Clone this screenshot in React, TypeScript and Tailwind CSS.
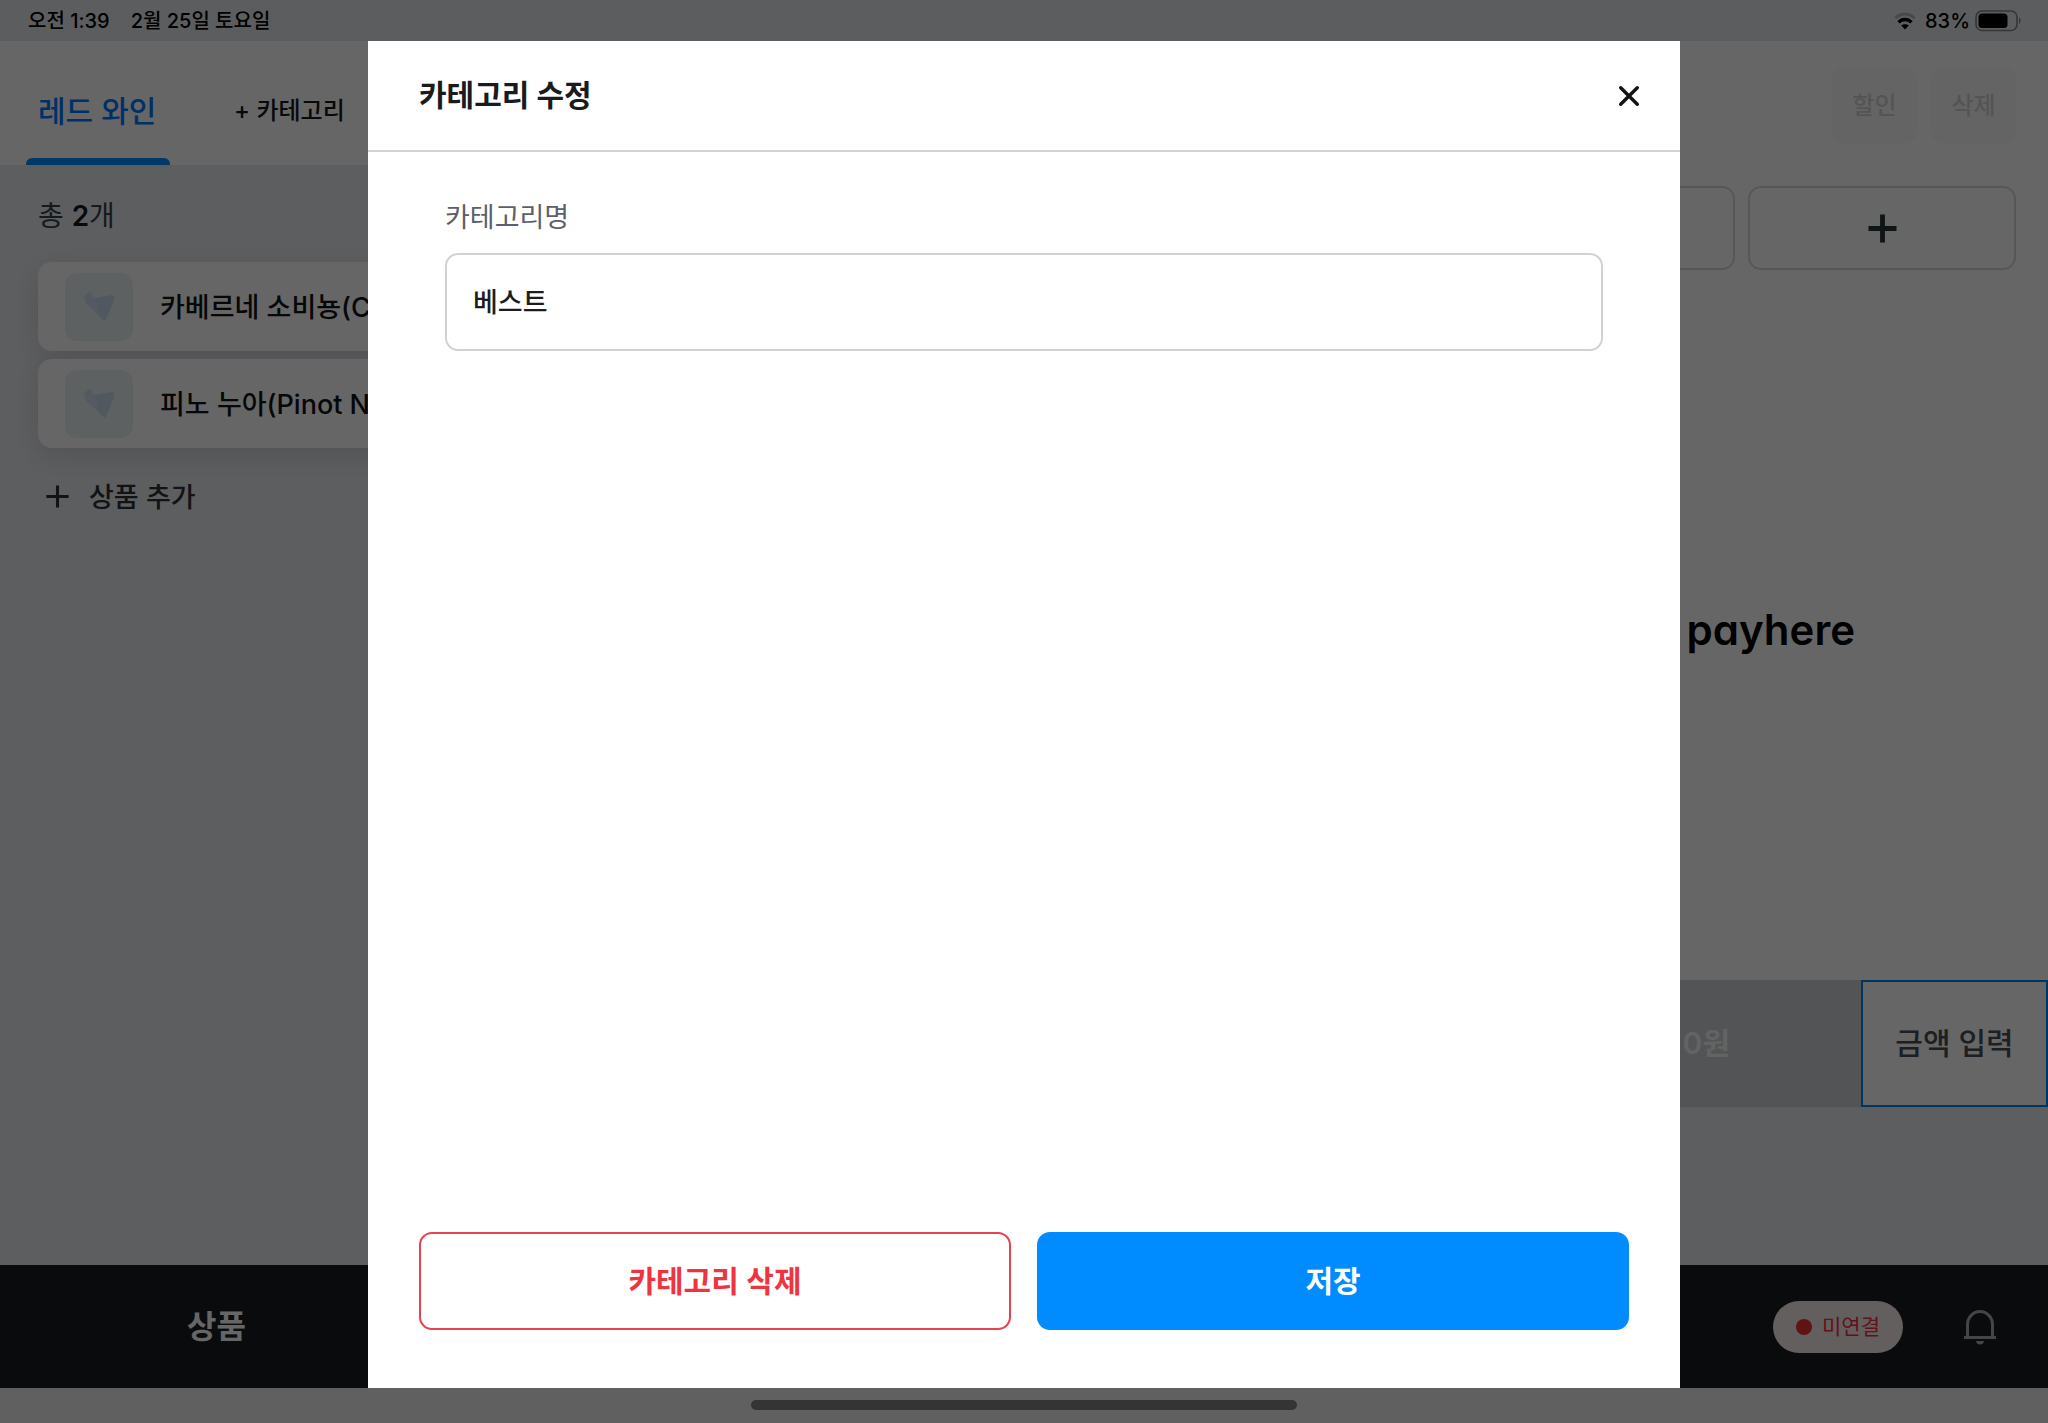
import { useState } from 'react';

const products = [
  { id: 1, name: '카베르네 소비뇽(Cabernet Sauvignon)' },
  { id: 2, name: '피노 누아(Pinot Noir)' },
];

function PlusIcon({ size, stroke }: { size: number; stroke: number }) {
  return (
    <svg width={size} height={size} viewBox="0 0 30 30" fill="none" stroke="currentColor" strokeWidth={stroke}>
      <path d="M15 0.5V29.5M0.5 15H29.5" />
    </svg>
  );
}

function HeartThumb() {
  return (
    <div className="flex h-[68px] w-[68px] shrink-0 items-center justify-center rounded-xl bg-[#ecf3f5]">
      <svg width="32" height="30" viewBox="0 0 32 30">
        <path d="M1 4L3 2L6 0L9 1L10 5L13 6L30 3L31 5L30 11L22 29L17 25L10 18L3 12Z" fill="#d3e2f2" />
        <path d="M12 6L30 3L31 5L30 11L22 29L17 25L15 16Z" fill="#cadbee" />
      </svg>
    </div>
  );
}

function StatusBar() {
  return (
    <header className="flex h-[41px] shrink-0 items-center justify-between bg-[#e7e8ec] pr-[26px] pl-7 text-[20px] font-medium text-black">
      <div className="flex gap-[21px]">
        <span>오전 1:39</span>
        <span>2월 25일 토요일</span>
      </div>
      <div className="flex items-center">
        <svg className="mr-[9px]" width="22" height="18" viewBox="0 0 22 18" fill="none">
          <path d="M1.500 6.200C7 0.600 15 0.600 20.500 6.200" stroke="#b4b5b8" strokeWidth="3" />
          <path d="M4.500 10.300C8.300 6.500 13.700 6.500 17.500 10.300" stroke="#000" strokeWidth="3.400" />
          <path d="M11 17.500L7.200 13.600C9.400 11.700 12.600 11.700 14.800 13.600Z" fill="#000" />
        </svg>
        <span className="mr-[5px]">83%</span>
        <svg width="47" height="22" viewBox="0 0 47 22" fill="none">
          <rect x="1" y="1" width="41" height="19.5" rx="6" stroke="#85868a" strokeWidth="1.6" />
          <rect x="3.5" y="3.5" width="29" height="14.5" rx="3.5" fill="#000" />
          <path d="M44 7.5C46 8.5 46 13 44 14Z" fill="#85868a" />
        </svg>
      </div>
    </header>
  );
}

function ProductPanel() {
  return (
    <section className="flex min-w-0 flex-1 flex-col bg-[#e9ebef]">
      <nav className="flex h-[124px] shrink-0 bg-white pl-[26px]">
        <button className="flex w-36 flex-col text-[30px] font-medium text-[#0078ff]">
          <span className="flex flex-1 items-center pt-6 pl-3">레드 와인</span>
          <span className="h-[7px] w-full rounded-t-md bg-[#008cff]" />
        </button>
        <button className="ml-16 pt-6 pb-2 text-[24px] font-medium text-[#15181c]">+ 카테고리</button>
      </nav>
      <div className="flex flex-col pr-8 pl-[38px]">
        <p className="mt-[33px] text-[28px] leading-9 text-[#3b4046]">
          총 <b className="font-semibold text-[#15181c]">2</b>개
        </p>
        <ul className="mt-7 flex flex-col gap-2">
          {products.map((product) => (
            <li
              key={product.id}
              className="flex h-[89px] items-center rounded-[14px] bg-white px-[27px] shadow-[0_8px_28px_rgba(0,0,0,0.12)]"
            >
              <HeartThumb />
              <span className="ml-[27px] truncate pt-1 text-[27px] font-medium text-[#101214]">{product.name}</span>
            </li>
          ))}
        </ul>
        <button className="mt-[26px] flex items-center gap-5 self-start pl-2 text-[27px] font-medium text-[#2b3036]">
          <PlusIcon size={23} stroke={4} />
          <span className="pt-1">상품 추가</span>
        </button>
      </div>
    </section>
  );
}

function OrderPanel() {
  return (
    <section className="flex w-[894px] shrink-0 flex-col bg-[#e9ebef]">
      <div className="flex flex-1 flex-col bg-white px-8 pt-[27px]">
        <div className="flex justify-end gap-[14px] text-[24px] font-medium text-[#d3d3d5]">
          <button disabled className="h-[75px] w-[85px] rounded-[10px] bg-[#fafafa]">할인</button>
          <button disabled className="h-[75px] w-[85px] rounded-[10px] bg-[#fafafa]">삭제</button>
        </div>
        <div className="mt-[43px] grid grid-cols-3 gap-[13px] text-[#263238]">
          <button aria-label="주문 1" className="h-[84px] rounded-[13px] border-2 border-[#d9d9da]" />
          <button aria-label="주문 2" className="h-[84px] rounded-[13px] border-2 border-[#d9d9da]" />
          <button
            aria-label="주문 추가"
            className="flex h-[84px] items-center justify-center rounded-[13px] border-2 border-[#d9d9da]"
          >
            <PlusIcon size={29} stroke={5} />
          </button>
        </div>
        <div className="flex flex-1 items-center justify-end pt-2 pr-[161px]">
          <span className="text-[42px] font-semibold text-black [font-feature-settings:'cv11']">payhere</span>
        </div>
      </div>
      <div className="flex h-[127px] shrink-0 text-[30px]">
        <button disabled className="flex-1 bg-[#cdd2d6] pr-[131px] text-right font-semibold text-[#f7f8f9]">
          0원
        </button>
        <button className="w-[187px] border-2 border-[#0084f4] bg-white font-medium text-[#4a4f57]">금액 입력</button>
      </div>
      <div className="h-[158px] shrink-0" />
    </section>
  );
}

function BottomBar() {
  return (
    <footer className="flex h-[123px] shrink-0 items-center bg-[#191c20] pr-[51px]">
      <button className="w-[433px] text-[32px] font-semibold text-white">상품</button>
      <div className="ml-auto flex items-center gap-[60px]">
        <div className="flex h-[52px] w-[130px] items-center justify-center gap-[10px] rounded-full bg-[#fbeeee] text-[21px] text-[#f0303f]">
          <span className="h-4 w-4 rounded-full bg-[#ee3030]" />
          미연결
        </div>
        <button aria-label="알림">
          <svg width="34" height="36" viewBox="0 0 34 36" fill="none" stroke="#a9afb7" strokeWidth="3">
            <path d="M4.500 27.500V15.500C4.500 8.500 10 2.500 17 2.500S29.500 8.500 29.500 15.500V27.500" />
            <path d="M1 28.500H33" />
            <path d="M13 32H21C20.500 34.600 19 35.500 17 35.500S13.500 34.600 13 32Z" fill="#a9afb7" stroke="none" />
          </svg>
        </button>
      </div>
    </footer>
  );
}

function CategoryModal() {
  const [name, setName] = useState('베스트');

  return (
    <div className="fixed inset-0 flex justify-center bg-black/60 pt-[41px] pb-[35px]">
      <div role="dialog" aria-labelledby="modal-title" className="flex w-full max-w-[1312px] flex-col bg-white">
        {/* Title */}
        <div className="flex h-[111px] shrink-0 items-center justify-between border-b-2 border-[#d2d2d3] px-[51px]">
          <h1 id="modal-title" className="text-[30px] font-bold text-[#191b1f]">카테고리 수정</h1>
          <button aria-label="닫기" className="-mr-5 flex h-10 w-10 items-center justify-center">
            <svg width="22" height="22" viewBox="0 0 22 22" stroke="#121316" strokeWidth="3.4" strokeLinecap="round">
              <path d="M2.700 2.700L19.300 19.300M19.300 2.700L2.700 19.300" />
            </svg>
          </button>
        </div>

        {/* Form */}
        <div className="flex flex-1 flex-col px-[77px] pt-12">
          <label htmlFor="category-name" className="text-[27px] leading-9 text-[#5b5f6b]">
            카테고리명
          </label>
          <input
            id="category-name"
            value={name}
            onChange={(e) => setName(e.target.value)}
            className="mt-[17px] h-[98px] rounded-[13px] border-2 border-[#d2d2d3] px-[26px] pb-1 text-[27px] font-medium text-[#1c1d20] outline-none"
          />
        </div>

        {/* Actions */}
        <div className="grid grid-cols-2 gap-[26px] px-[51px] pb-[58px] text-[30px] font-semibold">
          <button className="h-[98px] rounded-[13px] border-2 border-[#e8414f] text-[#ef343f]">카테고리 삭제</button>
          <button className="h-[98px] rounded-[13px] bg-[#008cff] text-white">저장</button>
        </div>
      </div>
    </div>
  );
}

export default function App() {
  return (
    <div className="flex min-h-screen flex-col overflow-hidden bg-[#f0f0f0] font-['Inter','Noto_Sans_CJK_KR',sans-serif]">
      <StatusBar />
      <main className="flex flex-1">
        <ProductPanel />
        <OrderPanel />
      </main>
      <BottomBar />
      <div className="flex h-[35px] shrink-0 justify-center pt-3">
        <div className="h-[10px] w-[546px] rounded-full bg-[#828282]" />
      </div>
      <CategoryModal />
    </div>
  );
}
